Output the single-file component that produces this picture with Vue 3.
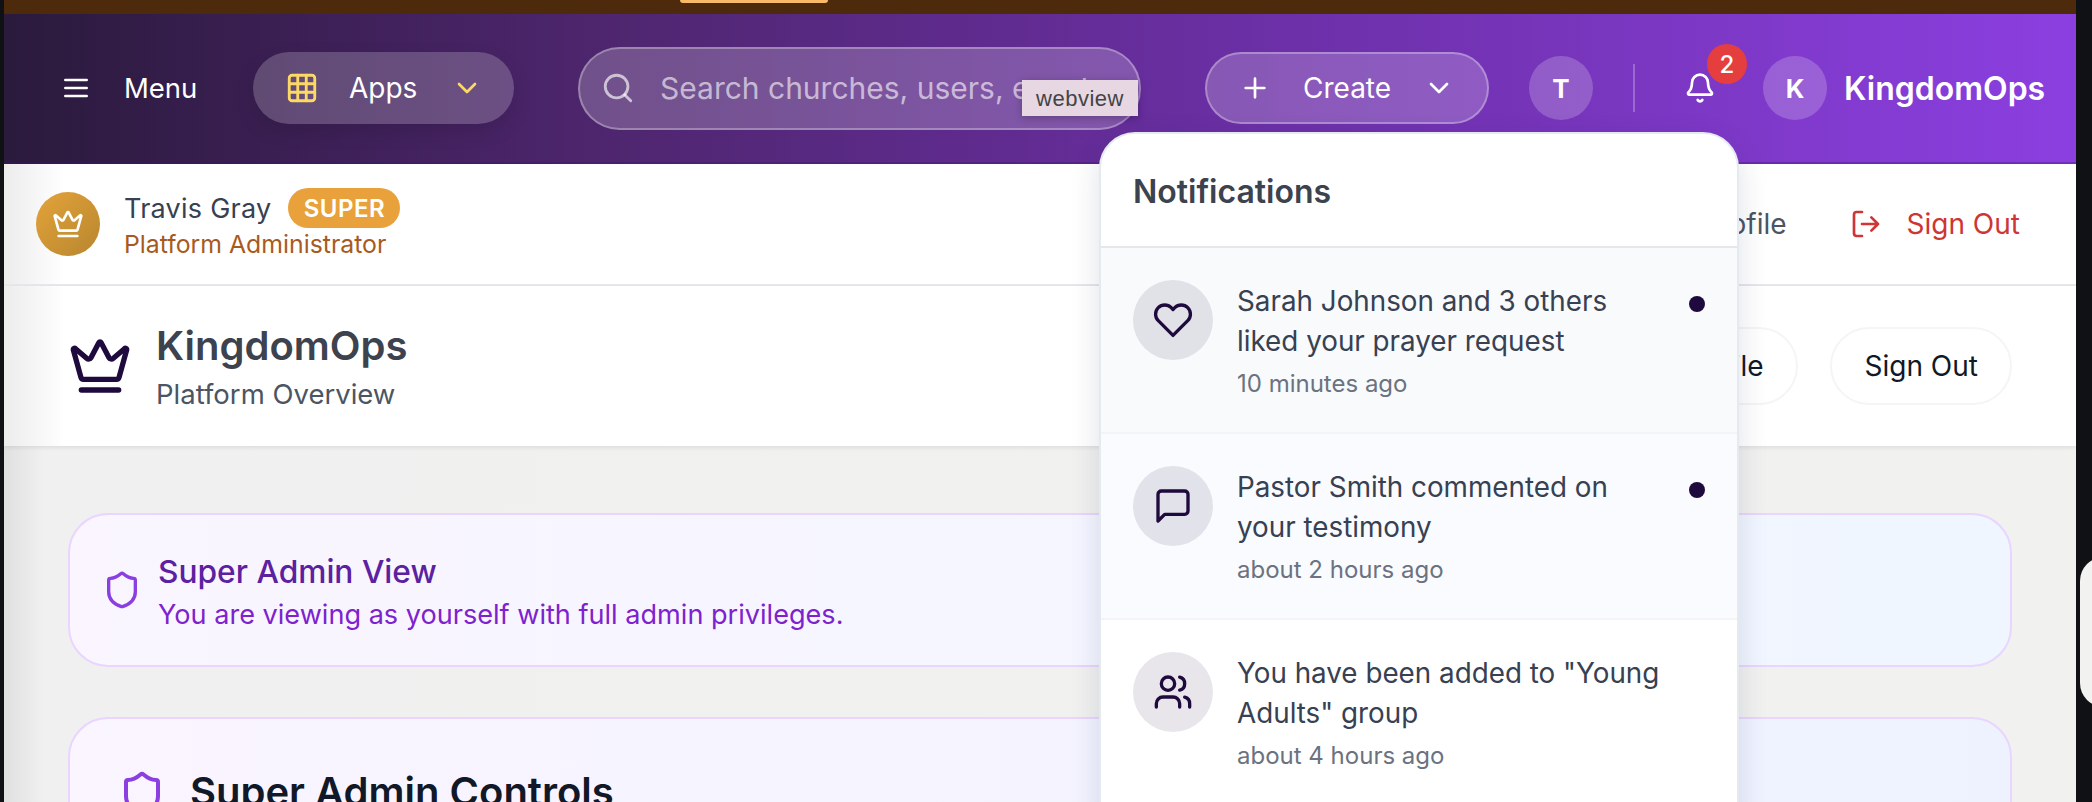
<script setup>
const notifications = [
  { text: 'Sarah Johnson and 3 others liked your prayer request', time: '10 minutes ago', unread: true, paths: ['M20.84 4.61a5.5 5.5 0 0 0-7.78 0L12 5.67l-1.06-1.06a5.5 5.5 0 0 0-7.78 7.78l1.06 1.06L12 21.23l7.78-7.78 1.06-1.06a5.5 5.5 0 0 0 0-7.78z'] },
  { text: 'Pastor Smith commented on your testimony', time: 'about 2 hours ago', unread: true, paths: ['M21 15a2 2 0 0 1-2 2H7l-4 4V5a2 2 0 0 1 2-2h14a2 2 0 0 1 2 2z'] },
  { text: 'You have been added to "Young Adults" group', time: 'about 4 hours ago', unread: false, paths: ['M16 21v-2a4 4 0 0 0-4-4H6a4 4 0 0 0-4 4v2', 'M13 7a4 4 0 1 1-8 0 4 4 0 0 1 8 0z', 'M22 21v-2a4 4 0 0 0-3-3.87', 'M16 3.13a4 4 0 0 1 0 7.75'] }
]
const crown = 'M11.562 3.266a.5.5 0 0 1 .876 0L15.39 8.87a1 1 0 0 0 1.516.294L21.183 5.5a.5.5 0 0 1 .798.519l-2.834 10.246a1 1 0 0 1-.956.734H5.81a1 1 0 0 1-.957-.734L2.02 6.02a.5.5 0 0 1 .798-.519l4.276 3.664a1 1 0 0 0 1.516-.294zM5 21h14'
const shield = 'M20 13c0 5-3.5 7.5-7.66 8.95a1 1 0 0 1-.67-.01C7.5 20.5 4 18 4 13V6a1 1 0 0 1 1-1c2 0 4.5-1.2 6.24-2.72a1.17 1.17 0 0 1 1.52 0C14.51 3.81 17 5 19 5a1 1 0 0 1 1 1z'
</script>

<template>
  <div class="screen">
    <div class="window">
      <div class="topband"><span class="topband-btn"></span></div>

      <header class="nav">
        <div class="menu">
          <svg class="ic menu-ic" viewBox="0 0 24 24"><path d="M4 6h16M4 12h16M4 18h16" /></svg>
          <span>Menu</span>
        </div>
        <div class="apps">
          <svg class="ic apps-ic" viewBox="0 0 24 24"><rect x="3" y="3" width="18" height="18" rx="2" /><path d="M3 9h18M3 15h18M9 3v18M15 3v18" /></svg>
          <span class="apps-label">Apps</span>
          <svg class="ic apps-chev" viewBox="0 0 24 24"><path d="m6 9 6 6 6-6" /></svg>
        </div>
        <div class="search">
          <svg class="ic search-ic" viewBox="0 0 24 24"><circle cx="11" cy="11" r="8" /><path d="m21 21-4.3-4.3" /></svg>
          <span class="search-text">Search churches, users, events...</span>
        </div>
        <div class="create">
          <svg class="ic plus-ic" viewBox="0 0 24 24"><path d="M5 12h14M12 5v14" /></svg>
          <span class="create-label">Create</span>
          <svg class="ic create-chev" viewBox="0 0 24 24"><path d="m6 9 6 6 6-6" /></svg>
        </div>
        <div class="avatar avatar-t">T</div>
        <div class="divider"></div>
        <div class="bell">
          <svg class="ic bell-ic" viewBox="0 0 24 24"><path d="M10.268 21a2 2 0 0 0 3.464 0" /><path d="M3.262 15.326A1 1 0 0 0 4 17h16a1 1 0 0 0 .74-1.673C19.41 13.956 18 12.499 18 8A6 6 0 0 0 6 8c0 4.499-1.411 5.956-2.738 7.326" /></svg>
          <span class="badge">2</span>
        </div>
        <div class="avatar avatar-k">K</div>
        <span class="brand">KingdomOps</span>
      </header>

      <section class="userbar">
        <div class="gold"><svg class="ic gold-ic" viewBox="0 0 24 24"><path :d="crown" /></svg></div>
        <div class="user-info">
          <div class="user-top"><span class="user-name">Travis Gray</span><span class="super">SUPER</span></div>
          <div class="user-role">Platform Administrator</div>
        </div>
        <div class="user-actions">
          <span class="ub-profile">Profile</span>
          <svg class="ic out-ic" viewBox="0 0 24 24"><path d="M9 21H5a2 2 0 0 1-2-2V5a2 2 0 0 1 2-2h4M16 17l5-5-5-5M21 12H9" /></svg>
          <span class="ub-out">Sign Out</span>
        </div>
      </section>

      <section class="pagehead">
        <svg class="ic head-crown" viewBox="0 0 24 24"><path :d="crown" /></svg>
        <div class="head-text">
          <div class="head-title">KingdomOps</div>
          <div class="head-sub">Platform Overview</div>
        </div>
        <div class="head-actions">
          <span class="welcome">Welcome, Travis Gray</span>
          <span class="pill pill-profile">Profile</span>
          <span class="pill">Sign Out</span>
        </div>
      </section>

      <main class="main">
        <div class="card alert">
          <svg class="ic alert-ic" viewBox="0 0 24 24"><path :d="shield" /></svg>
          <div class="alert-body">
            <div class="alert-title">Super Admin View</div>
            <div class="alert-text">You are viewing as yourself with full admin privileges.</div>
          </div>
        </div>
        <div class="card controls">
          <svg class="ic ctrl-ic" viewBox="0 0 24 24"><path :d="shield" /></svg>
          <div class="ctrl-title">Super Admin Controls</div>
        </div>
      </main>
    </div>

    <span class="side-handle"></span>

    <div class="tooltip">webview</div>

    <aside class="panel">
      <div class="panel-head">Notifications</div>
      <div v-for="n in notifications" :key="n.time" class="note" :class="{ unread: n.unread }">
        <div class="note-icon">
          <svg class="ic note-ic" viewBox="0 0 24 24"><path v-for="d in n.paths" :key="d" :d="d" /></svg>
        </div>
        <div class="note-body">
          <div class="note-text">{{ n.text }}</div>
          <div class="note-time">{{ n.time }}</div>
        </div>
        <span v-if="n.unread" class="dot"></span>
      </div>
    </aside>
  </div>
</template>

<style>
html, body { margin: 0; background: #101114; overflow: hidden; }
</style>

<style scoped>
* { box-sizing: border-box; }
.screen {
  position: relative;
  width: 2092px;
  height: 802px;
  overflow: hidden;
  background: #101114;
  font-family: Inter, "Liberation Sans", sans-serif;
  padding: 0 16px 0 4px;
}
.window { height: 802px; display: flex; flex-direction: column; overflow: hidden; background: #f1f1ef; }
.ic { fill: none; stroke: currentColor; stroke-width: 2; stroke-linecap: round; stroke-linejoin: round; flex: none; display: block; }

.topband { height: 14px; flex: none; background: #4d2a0c; }
.topband-btn { display: block; width: 148px; height: 3px; margin-left: 676px; background: #f8b968; border-radius: 0 0 8px 8px; }

.nav {
  height: 150px;
  flex: none;
  display: flex;
  align-items: center;
  padding: 0 0 0 56px;
  color: #fff;
  background: linear-gradient(90deg, #2a1a3c 0%, #4f2670 30%, #6b2fa5 60%, #8b3fe0 100%);
  border-bottom: 2px solid rgba(60, 20, 110, 0.35);
}
.menu { display: flex; align-items: center; font-size: 27.5px; font-weight: 400; width: 193px; }
.menu-ic { width: 32px; height: 32px; margin-right: 32px; }
.apps {
  width: 261px; height: 72px; border-radius: 36px; display: flex; align-items: center;
  background: rgba(255, 255, 255, 0.2);
  box-shadow: 0 8px 20px rgba(0, 0, 0, 0.12);
  padding-left: 32px; font-size: 28px; font-weight: 400;
}
.apps-ic { width: 34px; height: 34px; color: #fcd965; }
.apps-label { margin-left: 30px; width: 102px; }
.apps-chev { width: 32px; height: 32px; color: #fcd965; }
.search {
  width: 563px; height: 83px; margin-left: 64px; border-radius: 42px; display: flex; align-items: center;
  background: rgba(255, 255, 255, 0.2);
  border: 2px solid rgba(255, 255, 255, 0.3);
  padding-left: 21px; overflow: hidden; white-space: nowrap;
}
.search-ic { width: 34px; height: 34px; color: rgba(255, 255, 255, 0.65); }
.search-text { margin-left: 25px; font-size: 30px; color: rgba(255, 255, 255, 0.6); }
.create {
  width: 284px; height: 72px; margin-left: 64px; border-radius: 36px; display: flex; align-items: center;
  background: rgba(255, 255, 255, 0.2);
  border: 2px solid rgba(255, 255, 255, 0.3);
  padding-left: 32px; font-size: 28px; font-weight: 400;
}
.plus-ic { width: 32px; height: 32px; }
.create-label { margin-left: 32px; width: 120px; }
.create-chev { width: 32px; height: 32px; }
.avatar {
  width: 64px; height: 64px; border-radius: 50%; display: flex; align-items: center; justify-content: center;
  background: rgba(255, 255, 255, 0.2); font-size: 26px; font-weight: 700; flex: none;
}
.avatar-t { margin-left: 40px; }
.divider { width: 2px; height: 48px; margin-left: 40px; background: rgba(255, 255, 255, 0.25); flex: none; }
.bell { position: relative; margin-left: 49px; width: 32px; height: 32px; flex: none; }
.bell-ic { width: 32px; height: 32px; }
.badge {
  position: absolute; left: 23px; top: -28px; width: 40px; height: 40px; border-radius: 50%;
  background: #e53e3e; display: flex; align-items: center; justify-content: center; font-size: 24px; font-weight: 500;
}
.avatar-k { margin-left: 47px; }
.brand { margin-left: 17px; font-size: 32px; font-weight: 600; white-space: nowrap; }

.userbar {
  height: 122px; flex: none; display: flex; align-items: center; padding: 0 56px 0 32px;
  background: linear-gradient(90deg, #ececec 0, #fff 60px);
  border-bottom: 2px solid #e5e7eb;
}
.gold {
  width: 64px; height: 64px; border-radius: 50%; display: flex; align-items: center; justify-content: center;
  background: linear-gradient(135deg, #e3a33a, #b8862f); color: #fff;
}
.gold-ic { width: 32px; height: 32px; }
.user-info { margin-left: 24px; }
.user-top { display: flex; align-items: center; height: 40px; margin-top: -1px; }
.user-name { font-size: 27px; color: #374151; font-weight: 400; letter-spacing: 0.25px; }
.super {
  margin-left: 17px; height: 40px; width: 112px; border-radius: 20px; background: #e9a23b; color: #fff;
  font-size: 24px; font-weight: 600; display: flex; align-items: center; justify-content: center; letter-spacing: 0.5px;
}
.user-role { font-size: 24.8px; color: #a85a1e; font-weight: 400; margin-top: 1px; }
.user-actions { margin-left: auto; display: flex; align-items: center; font-size: 28px; font-weight: 400; }
.ub-profile { color: #4b5563; }
.out-ic { width: 32px; height: 32px; color: #cf3535; margin-left: 63px; }
.ub-out { color: #cf3535; margin-left: 25px; }

.pagehead {
  height: 160px; flex: none; display: flex; align-items: center; padding: 0 64px 0 64px;
  background: linear-gradient(90deg, #ececec 0, #fff 60px);
  box-shadow: 0 2px 4px rgba(0, 0, 0, 0.08);
  position: relative;
}
.head-crown { width: 64px; height: 64px; color: #1e0a3c; }
.head-text { margin-left: 24px; }
.head-title { font-size: 40px; font-weight: 600; color: #3c424e; line-height: 52px; margin-top: 1px; }
.head-sub { font-size: 27.5px; color: #4b5563; line-height: 40px; margin-top: 2px; }
.head-actions { margin-left: auto; display: flex; align-items: center; gap: 32px; }
.welcome { font-size: 30px; color: #111827; margin-right: 1px; }
.pill {
  height: 78px; padding: 0 32px 0 33px; border: 2px solid #f5f5f5; border-radius: 39px; display: flex; align-items: center;
  font-size: 28px; font-weight: 400; color: #111827;
}

.main {
  flex: 1; padding: 67px 64px 0; display: flex; flex-direction: column; gap: 50px; overflow: hidden;
  background: linear-gradient(90deg, #e0e0e0 0, #f0f0f0 40px, #f1f1ef 100%);
}
.card { border: 2px solid #e9d5ff; border-radius: 40px; flex: none; display: flex; }
.alert {
  height: 154px; align-items: center; padding-left: 32px; gap: 16px;
  background: linear-gradient(90deg, #faf5ff, #eff6ff);
}
.alert-ic { width: 40px; height: 40px; color: #8b3fe0; }
.alert-body { padding-top: 4px; }
.alert-title { font-size: 31.7px; font-weight: 500; color: #5b21a0; line-height: 44px; }
.alert-text { font-size: 27.1px; color: #7e22ce; line-height: 40px; margin-top: 1px; }
.controls {
  height: 200px; align-items: flex-start; padding: 51px 0 0 48px; gap: 24px;
  background: linear-gradient(90deg, #faf5ff, #eef2ff);
}
.ctrl-ic { width: 48px; height: 48px; color: #8b3fe0; }
.ctrl-title { font-size: 40px; font-weight: 600; color: #111827; line-height: 48px; margin-top: -2px; }

.side-handle {
  position: absolute; left: 2080px; top: 557px; width: 30px; height: 150px; border-radius: 24px 0 0 24px; background: #f2f2f0;
}
.tooltip {
  position: absolute; left: 1022px; top: 80px; width: 116px; height: 36px; padding-top: 2px; background: #e6d7e2; color: #444;
  font-family: "Liberation Sans", sans-serif; font-size: 22px; letter-spacing: 0.5px; display: flex; align-items: center; justify-content: center;
  box-shadow: 0 2px 8px rgba(0, 0, 0, 0.25); z-index: 3;
}
.panel {
  position: absolute; left: 1099px; top: 132px; width: 640px; height: 720px; background: #fff;
  border: 2px solid #e5e9f0; border-radius: 36px; overflow: hidden; z-index: 2;
  box-shadow: 0 10px 30px rgba(30, 40, 80, 0.14);
}
.panel-head {
  height: 114px; padding: 2px 0 0 32px; display: flex; align-items: center; font-size: 32px; font-weight: 600; color: #3c424e;
  border-bottom: 2px solid #e5e7eb;
}
.note { height: 186px; padding: 32px 32px 0 32px; display: flex; border-bottom: 2px solid #f3f4f6; position: relative; }
.note.unread { background: #f8fafc; }
.note.unread:nth-child(3) { background: #f9fbff; }
.note-icon {
  width: 80px; height: 80px; border-radius: 50%; background: rgba(30, 10, 60, 0.1); display: flex; align-items: center; justify-content: center; flex: none;
}
.note-ic { width: 40px; height: 40px; color: #1e0a3c; }
.note-body { margin-left: 24px; width: 432px; }
.note-text { font-size: 27.8px; line-height: 40px; color: #374151; margin-top: 1px; }
.note-time { font-size: 24px; color: #6b7280; margin-top: 8px; line-height: 30px; }
.dot { position: absolute; left: 588px; top: 48px; width: 16px; height: 16px; border-radius: 50%; background: #1e0a3c; }
</style>
